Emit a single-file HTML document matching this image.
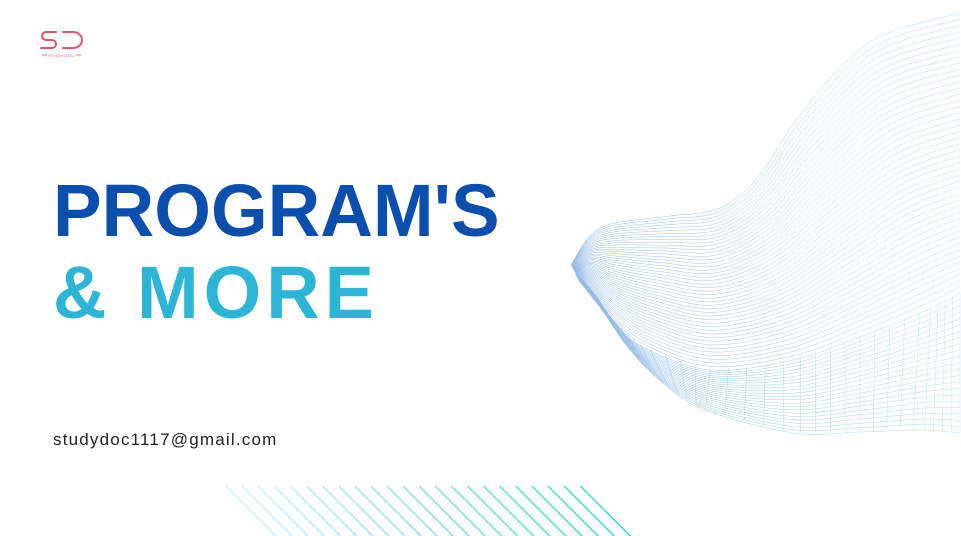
<!DOCTYPE html>
<html><head><meta charset="utf-8">
<style>
html,body{margin:0;padding:0;background:#fff;}
body{width:961px;height:536px;position:relative;overflow:hidden;font-family:"Liberation Sans",sans-serif;}
.t{position:absolute;left:53px;font-weight:bold;white-space:nowrap;}
#t1{top:168px;font-size:74px;color:#0a4fae;letter-spacing:0px;transform:scaleX(0.985);transform-origin:left;}
#t2{top:250px;font-size:74px;color:#2db5d8;letter-spacing:5px;}
#em{position:absolute;left:53px;top:430px;font-size:17px;color:#222;letter-spacing:1.2px;}
svg{position:absolute;left:0;top:0;}
</style></head><body>
<svg id="s" width="961" height="536" viewBox="0 0 961 536">
<defs>
<linearGradient id="g" x1="570" y1="0" x2="961" y2="0" gradientUnits="userSpaceOnUse">
<stop offset="0" stop-color="#6f9fdb"/><stop offset="1" stop-color="#97d6ea"/></linearGradient>
<linearGradient id="h" x1="226" y1="0" x2="630" y2="0" gradientUnits="userSpaceOnUse">
<stop offset="0" stop-color="#d9f6f8"/><stop offset="1" stop-color="#3fd8de"/></linearGradient>
</defs>
<g id="mesh" fill="none" stroke="url(#g)" stroke-width="0.5" opacity="0.75"></g>
<g id="hatch" stroke="url(#h)" stroke-width="1.6"></g>
<g fill="none" stroke="#e25468" stroke-width="2" stroke-linecap="round">
<path d="M56 32 H46 a4 4 0 0 0 0 8 H52 a4 4 0 0 1 0 8 H41"/>
<path d="M63 32 H73 a9 8 0 0 1 0 16 H63"/>
</g>
<g stroke="#e25468" stroke-width="0.8"><line x1="42" y1="55" x2="47" y2="55"/><line x1="76" y1="55" x2="81" y2="55"/></g>
<text x="61.5" y="57" font-size="4" fill="#e25468" text-anchor="middle" font-family="Liberation Sans" letter-spacing="0.5">STUDYDOC</text>
</svg>
<div class="t" id="t1">PROGRAM'S</div>
<div class="t" id="t2">&amp; MORE</div>
<div id="em">studydoc1117@gmail.com</div>
<script>
var A=[[571,265],[590,236],[615,223],[670,216],[720,208],[760,175],[800,115],[870,42],[960,13]];
var B=[[575,272],[593,292],[615,322],[643,347],[710,370],[793,360],[860,337],[927,310],[960,293]];
var C=[[580,282],[602,310],[630,350],[665,385],[705,410],[793,433],[860,432],[920,430],[960,433]];
function cr(p){var d="M"+p[0][0].toFixed(1)+" "+p[0][1].toFixed(1);
for(var i=0;i<p.length-1;i++){var p0=p[i-1]||p[i],p1=p[i],p2=p[i+1],p3=p[i+2]||p2;
d+=" C"+(p1[0]+(p2[0]-p0[0])/6).toFixed(1)+" "+(p1[1]+(p2[1]-p0[1])/6).toFixed(1)+" "+(p2[0]-(p3[0]-p1[0])/6).toFixed(1)+" "+(p2[1]-(p3[1]-p1[1])/6).toFixed(1)+" "+p2[0].toFixed(1)+" "+p2[1].toFixed(1);}
return d;}
function lerp(P,Q,t){return P.map(function(a,i){return[a[0]+(Q[i][0]-a[0])*t,a[1]+(Q[i][1]-a[1])*t];});}
var g=document.getElementById("mesh"),s="";
for(var i=0;i<=45;i++){s+='<path d="'+cr(lerp(A,B,i/45))+'"/>';}
for(var i=1;i<=22;i++){s+='<path d="'+cr(lerp(B,C,i/22))+'"/>';}
for(var k=0;k<=36;k++){var u=k/36,idx=u*(B.length-1),j=Math.min(Math.floor(idx),B.length-2),f=idx-j;
var b=[B[j][0]+(B[j+1][0]-B[j][0])*f,B[j][1]+(B[j+1][1]-B[j][1])*f],c=[C[j][0]+(C[j+1][0]-C[j][0])*f,C[j][1]+(C[j+1][1]-C[j][1])*f];
s+='<path stroke-width="0.4" d="M'+b[0]+' '+b[1]+' Q'+(b[0]+c[0])/2+' '+((b[1]+c[1])/2+4)+' '+c[0]+' '+c[1]+'"/>';}
g.innerHTML=s;
var h=document.getElementById("hatch"),t="";
for(var i=0;i<23;i++){var x=226+i*16.1;t+='<line x1="'+x+'" y1="486" x2="'+(x+52)+'" y2="538"/>';}
h.innerHTML=t;
</script>
</body></html>
